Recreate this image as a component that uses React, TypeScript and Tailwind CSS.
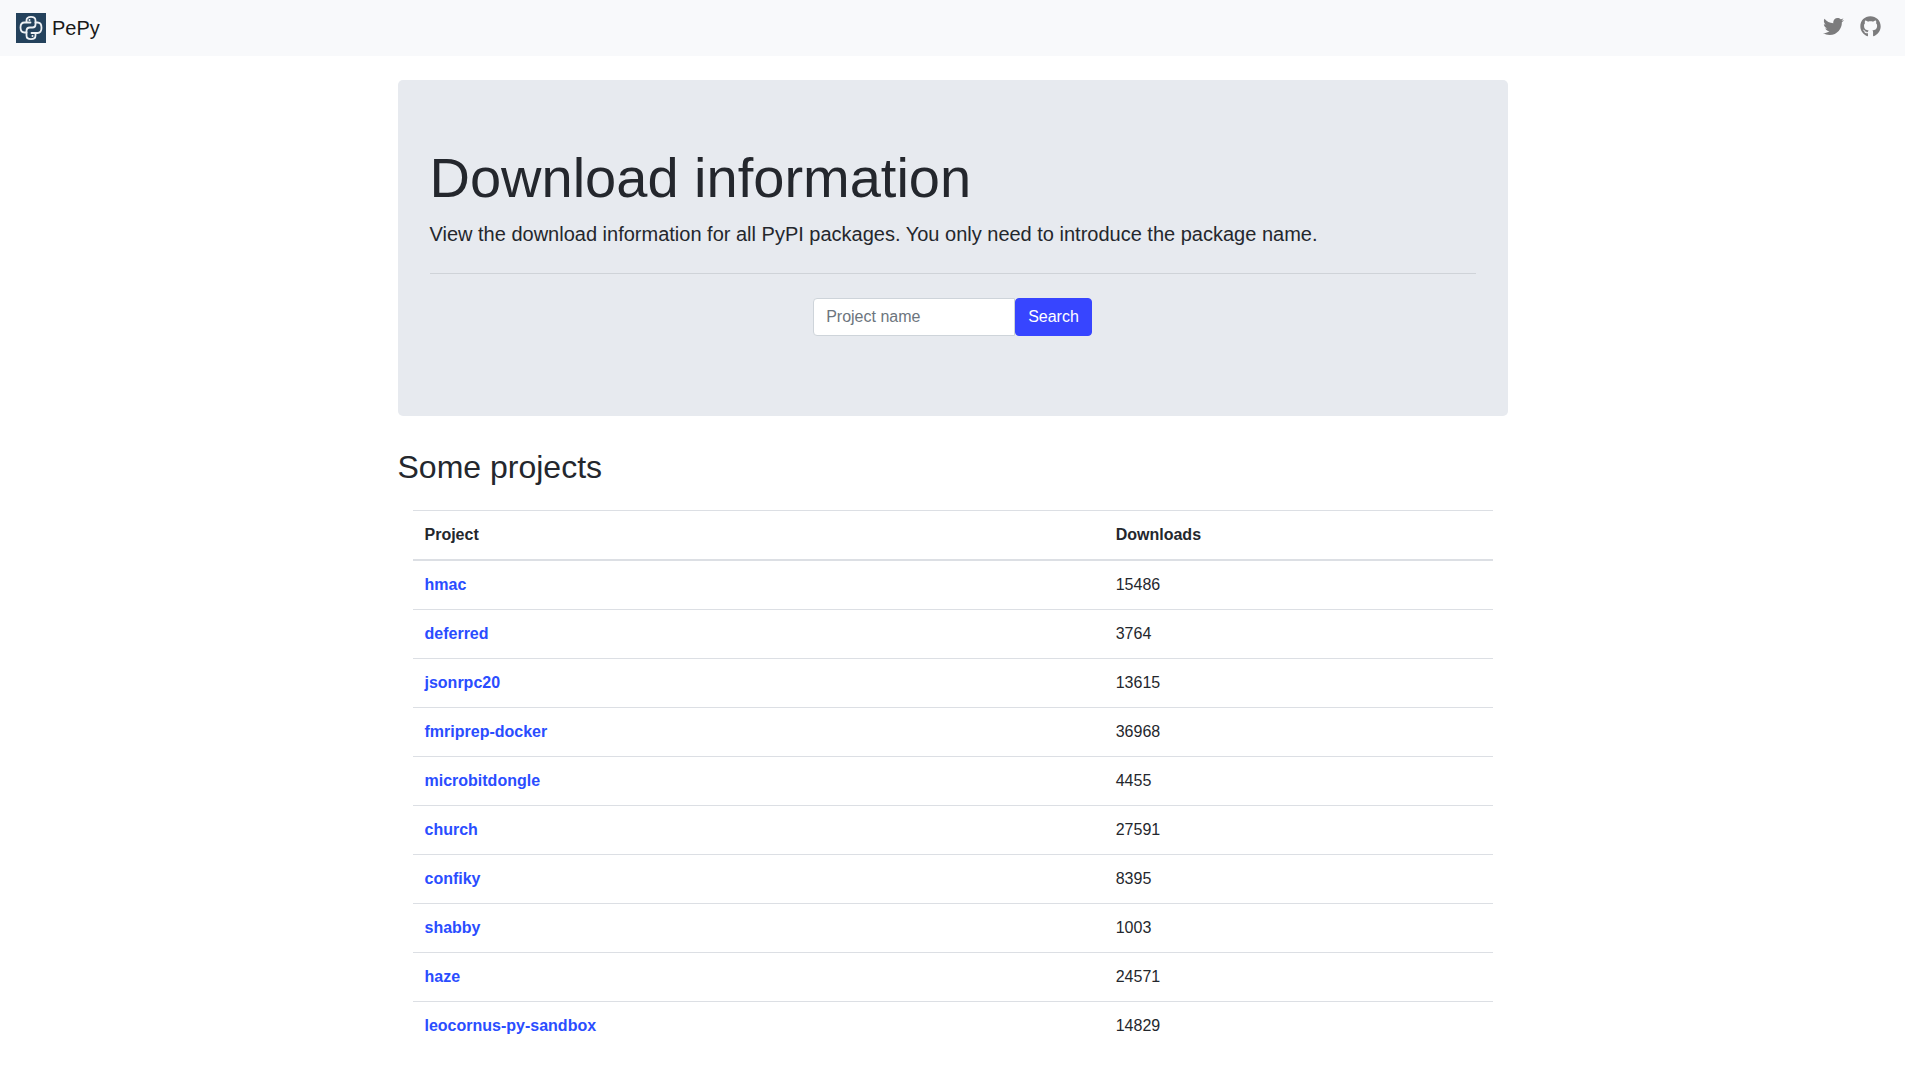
import { useState } from "react";
import { FaGithub, FaTwitter } from "react-icons/fa";

const projects = [
  { name: "hmac", downloads: 15486 },
  { name: "deferred", downloads: 3764 },
  { name: "jsonrpc20", downloads: 13615 },
  { name: "fmriprep-docker", downloads: 36968 },
  { name: "microbitdongle", downloads: 4455 },
  { name: "church", downloads: 27591 },
  { name: "confiky", downloads: 8395 },
  { name: "shabby", downloads: 1003 },
  { name: "haze", downloads: 24571 },
  { name: "leocornus-py-sandbox", downloads: 14829 },
];

function Logo() {
  return (
    <svg width="30" height="30" viewBox="0 0 30 30" aria-hidden="true">
      <rect width="30" height="30" fill="#24425c" />
      <g
        fill="none"
        stroke="#eef1f4"
        strokeWidth="1.8"
        strokeLinecap="round"
        strokeLinejoin="round"
      >
        <path d="M14.5 9.5H8.5C6 9.5 4.5 11.5 4.5 14.5S6 19.5 8.5 19.5H10.5V18C10.5 16 12 14.5 14 14.5H16.5C18.5 14.5 19.5 13.5 19.5 11.5V7.5C19.5 5 18 3.8 15 3.8S10.5 5 10.5 7.5V9.5" />
        <path d="M15.5 20H21.5C24 20 25.5 18 25.5 14.8S24 9.5 21.5 9.5H19.5M10.5 19.5V22.5C10.5 25 12 26.2 15 26.2S19.5 25 19.5 22.5V20" />
      </g>
      <circle cx="13.5" cy="7" r="1" fill="#eef1f4" />
      <circle cx="16.5" cy="23" r="1" fill="#eef1f4" />
    </svg>
  );
}

function Navbar() {
  return (
    <nav className="flex items-center justify-between h-14 pl-4 pr-6 bg-[#f8f9fb]">
      <a href="/" className="flex items-center gap-1.5 text-xl text-[#191919]">
        <Logo />
        PePy
      </a>
      <div className="flex items-center gap-4 pb-1 text-[21px] text-[#7c7c7d]">
        <a href="https://twitter.com" aria-label="Twitter">
          <FaTwitter />
        </a>
        <a href="https://github.com" aria-label="GitHub">
          <FaGithub />
        </a>
      </div>
    </nav>
  );
}

function SearchForm() {
  const [query, setQuery] = useState("");

  return (
    <form
      className="flex justify-center"
      onSubmit={(event) => event.preventDefault()}
    >
      <input
        type="text"
        aria-label="Project name"
        placeholder="Project name"
        value={query}
        onChange={(event) => setQuery(event.target.value)}
        className="w-[202px] px-3 py-1.5 bg-white border border-[#ced4da] rounded-l placeholder:text-[#6c757d]"
      />
      <button
        type="submit"
        className="px-3 py-1.5 border border-[#3745ff] bg-[#3745ff] text-white rounded"
      >
        Search
      </button>
    </form>
  );
}

export default function App() {
  return (
    <div className="font-['Liberation_Sans',Arial,sans-serif] text-base text-[#24272d]">
      <Navbar />

      <main className="max-w-[1110px] mx-auto mt-6">
        <section className="px-8 pt-16 pb-20 mb-8 bg-[#e7eaef] rounded-[5px]">
          <h1 className="mb-2 text-[56px] leading-[67px] font-light">
            Download information
          </h1>
          <p className="text-xl leading-[30px] font-light">
            View the download information for all PyPI packages. You only need
            to introduce the package name.
          </p>
          <hr className="my-6 border-[#cfd3d8]" />
          <SearchForm />
        </section>

        <h2 className="mb-6 text-[32px] leading-[38px]">Some projects</h2>

        <div className="px-[15px]">
          <table className="w-full table-fixed border-collapse text-left">
            <thead>
              <tr className="border-t border-b-2 border-[#dcdfe4]">
                <th className="w-[64%] p-3 font-bold">Project</th>
                <th className="p-3 font-bold">Downloads</th>
              </tr>
            </thead>
            <tbody>
              {projects.map((project) => (
                <tr
                  key={project.name}
                  className="border-b border-[#dcdfe4] last:border-b-0"
                >
                  <th scope="row" className="p-3 font-bold">
                    <a
                      href={`/project/${project.name}`}
                      className="text-[#2a4dff]"
                    >
                      {project.name}
                    </a>
                  </th>
                  <td className="p-3">{project.downloads}</td>
                </tr>
              ))}
            </tbody>
          </table>
        </div>
      </main>
    </div>
  );
}
